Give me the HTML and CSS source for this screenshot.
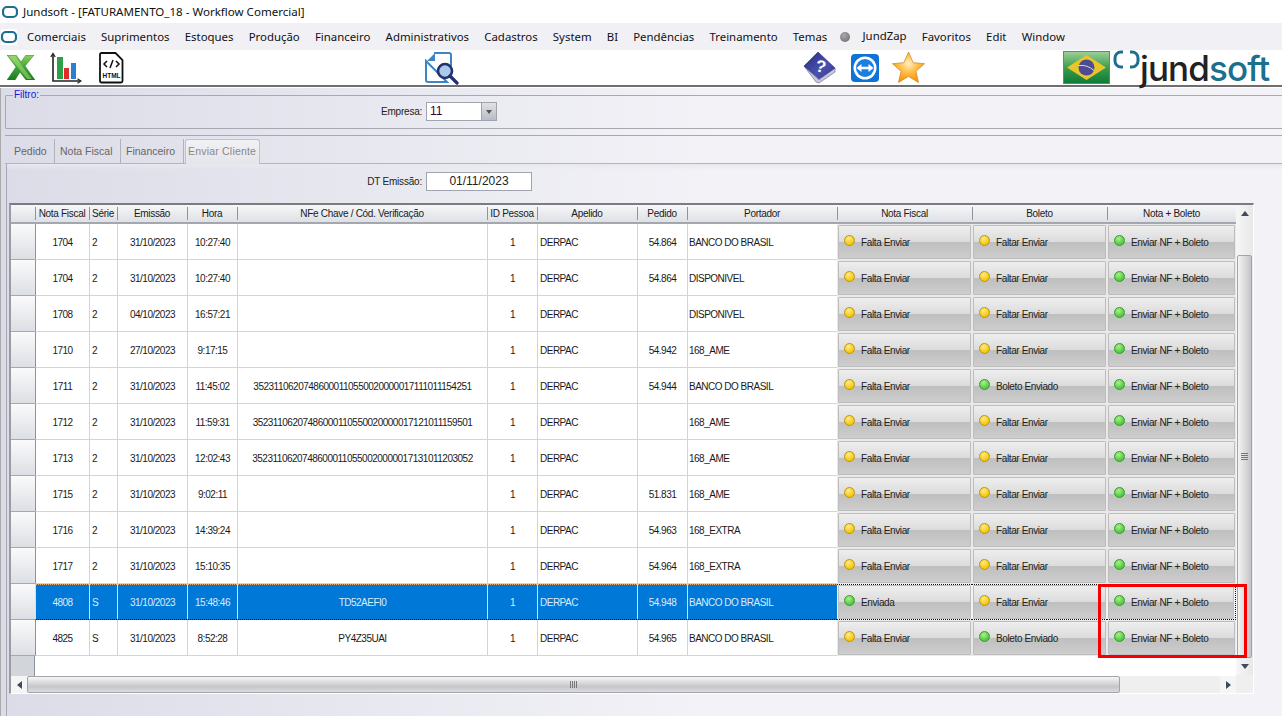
FILE: index.html
```html
<!DOCTYPE html>
<html lang="pt-BR">
<head>
<meta charset="utf-8">
<title>Jundsoft - [FATURAMENTO_18 - Workflow Comercial]</title>
<link rel="stylesheet" href="styles.css">
</head>
<body>
<svg class="defs" width="0" height="0" aria-hidden="true">
  <defs>
    <symbol id="app" viewBox="0 0 16 16">
      <path d="M5 3h6a4 4 0 0 1 4 4v2a4 4 0 0 1-4 4H5a4 4 0 0 1-4-4V7a4 4 0 0 1 4-4z" fill="none" stroke="#1c6f8f" stroke-width="2.2"/>
    </symbol>
    <radialGradient id="star" cx=".5" cy=".38" r=".62"><stop offset="0" stop-color="#fff0c8"/><stop offset=".45" stop-color="#ffc04a"/><stop offset="1" stop-color="#fb8f00"/></radialGradient>
    <linearGradient id="xl" x1="0" y1="0" x2="0" y2="1"><stop offset="0" stop-color="#8ed05c"/><stop offset=".5" stop-color="#3fa535"/><stop offset="1" stop-color="#1b7a20"/></linearGradient>
    <linearGradient id="book" x1="0" y1="0" x2="1" y2="1"><stop offset="0" stop-color="#2a2f80"/><stop offset=".6" stop-color="#4a50ae"/><stop offset="1" stop-color="#353a8e"/></linearGradient>
    <linearGradient id="flagbg" x1="0" y1="0" x2="0" y2="1"><stop offset="0" stop-color="#9fd09a"/><stop offset=".5" stop-color="#3c9d4c"/><stop offset="1" stop-color="#0c7a37"/></linearGradient>
  </defs>
</svg>

<div class="titlebar">
  <svg class="appicon" width="16" height="16"><use href="#app"/></svg>
  <span>Jundsoft - [FATURAMENTO_18 - Workflow Comercial]</span>
</div>

<nav class="menubar">
  <svg class="appicon menuicon" width="16" height="16"><use href="#app"/></svg>
  <span>Comerciais</span><span>Suprimentos</span><span>Estoques</span><span>Produção</span><span>Financeiro</span><span>Administrativos</span><span>Cadastros</span><span>System</span><span>BI</span><span>Pendências</span><span>Treinamento</span><span>Temas</span>
  <i class="zapdot"></i><span class="zap">JundZap</span><span>Favoritos</span><span>Edit</span><span>Window</span>
</nav>

<div class="toolbar">
  <div class="tools-left">
    <svg width="28" height="25" viewBox="0 0 28 25"><path d="M0 0h9l5 7 5-7h8l-9 11 10 14h-9l-6-8-5 8H0l9-13z" fill="url(#xl)" stroke="#1b7a20" stroke-width=".5"/><path d="M2 1h6l10 14 7 9h-5L9 10z" fill="#a6e07a" fill-opacity=".55"/></svg>
    <svg width="32" height="32" viewBox="0 0 32 32"><path d="M3 2v27h27" fill="none" stroke="#222" stroke-width="1.600"/><path d="M.8 5L3 1.500 5.200 5M27.500 26.800L31 29l-3.500 2.200" fill="none" stroke="#222" stroke-width="1.200"/><rect x="7" y="5" width="6" height="22" fill="#2ba24a"/><rect x="14" y="16" width="5" height="11" fill="#e32b2b"/><rect x="21" y="11" width="5" height="16" fill="#2b7fd0"/></svg>
    <svg class="htmlicon" width="25" height="32" viewBox="0 0 25 32"><path d="M2.500 1h14l7 7v21a1.500 1.500 0 0 1-1.500 1.500H2.500A1.500 1.500 0 0 1 1 29V2.500A1.500 1.500 0 0 1 2.500 1z" fill="#fff" stroke="#111" stroke-width="1.800"/><path d="M8 9l-3 3 3 3M17 9l3 3-3 3M14 8l-3 8" fill="none" stroke="#111" stroke-width="1.500"/><text x="12.500" y="26" text-anchor="middle" class="htmltext">HTML</text></svg>
  </div>
  <svg class="tool-search" width="34" height="34" viewBox="0 0 34 34"><path d="M9 2h15a2 2 0 0 1 2 2v11M22 31H3a2 2 0 0 1-2-2V10z" fill="none" stroke="#3d85c6" stroke-width="2"/><path d="M10 2L2 10h8z" fill="#3d85c6"/><circle cx="20" cy="20" r="7" fill="#a8cbe8" stroke="#27306f" stroke-width="2.600"/><path d="M25 25l7 7" stroke="#27306f" stroke-width="3.200" stroke-linecap="round"/></svg>
  <div class="tools-mid">
    <svg width="33" height="33" viewBox="0 0 33 33"><path d="M1 15l12 16 3 1 16-11v-4L16 29z" fill="#c9cbdc" stroke="#6a6fa8" stroke-width=".7"/><path d="M1 15L15 1l17 16-16 11z" fill="url(#book)" stroke="#2a2f78" stroke-width=".6"/><text x="0" y="0" text-anchor="middle" transform="translate(16.500 21) rotate(12)" class="booktext">?</text></svg>
    <svg width="28" height="28" viewBox="0 0 28 28"><rect width="28" height="28" rx="4" fill="#0e72d6"/><circle cx="14" cy="14" r="11.500" fill="#fff"/><circle cx="14" cy="14" r="9" fill="#1a7fe0"/><path d="M5.500 14l5-4v2.700h7V10l5 4-5 4v-2.700h-7V18z" fill="#fff"/></svg>
    <svg class="staricon" width="33" height="33" viewBox="0 0 33 33"><path d="M16.500 1l4.700 10.700 11.300 1-8.600 7.500 2.600 11.300-10-6.100-10 6.100 2.600-11.300L.5 12.700l11.300-1z" fill="url(#star)" stroke="#c98a3a" stroke-width=".8"/></svg>
  </div>
  <div class="brand">
    <svg class="flag" width="47" height="33" viewBox="0 0 47 33"><rect x=".5" y=".5" width="46" height="32" fill="url(#flagbg)" stroke="#4c9a60"/><path d="M4 16.500L23.500 4 43 16.500 23.500 29z" fill="#e8c52a"/><circle cx="23.500" cy="16.500" r="8" fill="#4d4a96"/><path d="M15.500 14.500q9-1 15.500 5" fill="none" stroke="#d8d8e8" stroke-width="1"/></svg>
    <svg class="brandmark" width="27" height="22" viewBox="0 0 27 22"><path d="M10 2H8a6 6 0 0 0-6 6v3a6 6 0 0 0 6 6h2M17 2h2a6 6 0 0 1 6 6v3a6 6 0 0 1-6 6h-2" fill="none" stroke="#1c6f8f" stroke-width="3"/></svg>
    <span class="brandname"><b>jund</b><em>soft</em></span>
  </div>
</div>
<div class="toolrule"></div>

<main class="workspace">
  <fieldset class="filter">
    <legend>Filtro:</legend>
    <div class="filter-row">
      <label class="fieldlabel">Empresa:</label>
      <div class="combo"><span>11</span><i class="combo-btn"></i></div>
    </div>
  </fieldset>

  <section class="tabpanel">
    <div class="tabs">
      <span class="tab">Pedido</span><span class="tab">Nota Fiscal</span><span class="tab">Financeiro</span><span class="tab active">Enviar Cliente</span>
    </div>
    <div class="tabbody">
      <div class="date-row">
        <label class="fieldlabel">DT Emissão:</label>
        <div class="dateinput">01/11/2023</div>
      </div>

      <div class="gridframe">
        <div class="gridmain">
          <table class="grid">
            <colgroup>
              <col class="c-ind"><col class="c-nf"><col class="c-ser"><col class="c-em"><col class="c-hr"><col class="c-key"><col class="c-id"><col class="c-ap"><col class="c-ped"><col class="c-port"><col class="c-btn"><col class="c-btn"><col class="c-last">
            </colgroup>
            <thead>
              <tr><th class="ind"></th><th>Nota Fiscal</th><th>Série</th><th>Emissão</th><th>Hora</th><th>NFe Chave / Cód. Verificação</th><th>ID Pessoa</th><th>Apelido</th><th>Pedido</th><th>Portador</th><th>Nota Fiscal</th><th>Boleto</th><th>Nota + Boleto</th></tr>
            </thead>
            <tbody>
              <tr><td class="ind"></td><td class="ct">1704</td><td>2</td><td class="ct">31/10/2023</td><td class="ct">10:27:40</td><td class="ct"></td><td class="ct">1</td><td>DERPAC</td><td class="ct">54.864</td><td class="port">BANCO DO BRASIL</td><td class="bc"><button><i class="led y"></i>Falta Enviar</button></td><td class="bc"><button><i class="led y"></i>Faltar Enviar</button></td><td class="bc"><button><i class="led g"></i>Enviar NF + Boleto</button></td></tr>
              <tr><td class="ind"></td><td class="ct">1704</td><td>2</td><td class="ct">31/10/2023</td><td class="ct">10:27:40</td><td class="ct"></td><td class="ct">1</td><td>DERPAC</td><td class="ct">54.864</td><td class="port">DISPONIVEL</td><td class="bc"><button><i class="led y"></i>Falta Enviar</button></td><td class="bc"><button><i class="led y"></i>Faltar Enviar</button></td><td class="bc"><button><i class="led g"></i>Enviar NF + Boleto</button></td></tr>
              <tr><td class="ind"></td><td class="ct">1708</td><td>2</td><td class="ct">04/10/2023</td><td class="ct">16:57:21</td><td class="ct"></td><td class="ct">1</td><td>DERPAC</td><td class="ct"></td><td class="port">DISPONIVEL</td><td class="bc"><button><i class="led y"></i>Falta Enviar</button></td><td class="bc"><button><i class="led y"></i>Faltar Enviar</button></td><td class="bc"><button><i class="led g"></i>Enviar NF + Boleto</button></td></tr>
              <tr><td class="ind"></td><td class="ct">1710</td><td>2</td><td class="ct">27/10/2023</td><td class="ct">9:17:15</td><td class="ct"></td><td class="ct">1</td><td>DERPAC</td><td class="ct">54.942</td><td class="port">168_AME</td><td class="bc"><button><i class="led y"></i>Falta Enviar</button></td><td class="bc"><button><i class="led y"></i>Faltar Enviar</button></td><td class="bc"><button><i class="led g"></i>Enviar NF + Boleto</button></td></tr>
              <tr><td class="ind"></td><td class="ct">1711</td><td>2</td><td class="ct">31/10/2023</td><td class="ct">11:45:02</td><td class="ct">35231106207486000110550020000017111011154251</td><td class="ct">1</td><td>DERPAC</td><td class="ct">54.944</td><td class="port">BANCO DO BRASIL</td><td class="bc"><button><i class="led y"></i>Falta Enviar</button></td><td class="bc"><button><i class="led g"></i>Boleto Enviado</button></td><td class="bc"><button><i class="led g"></i>Enviar NF + Boleto</button></td></tr>
              <tr><td class="ind"></td><td class="ct">1712</td><td>2</td><td class="ct">31/10/2023</td><td class="ct">11:59:31</td><td class="ct">35231106207486000110550020000017121011159501</td><td class="ct">1</td><td>DERPAC</td><td class="ct"></td><td class="port">168_AME</td><td class="bc"><button><i class="led y"></i>Falta Enviar</button></td><td class="bc"><button><i class="led y"></i>Faltar Enviar</button></td><td class="bc"><button><i class="led g"></i>Enviar NF + Boleto</button></td></tr>
              <tr><td class="ind"></td><td class="ct">1713</td><td>2</td><td class="ct">31/10/2023</td><td class="ct">12:02:43</td><td class="ct">35231106207486000110550020000017131011203052</td><td class="ct">1</td><td>DERPAC</td><td class="ct"></td><td class="port">168_AME</td><td class="bc"><button><i class="led y"></i>Falta Enviar</button></td><td class="bc"><button><i class="led y"></i>Faltar Enviar</button></td><td class="bc"><button><i class="led g"></i>Enviar NF + Boleto</button></td></tr>
              <tr><td class="ind"></td><td class="ct">1715</td><td>2</td><td class="ct">31/10/2023</td><td class="ct">9:02:11</td><td class="ct"></td><td class="ct">1</td><td>DERPAC</td><td class="ct">51.831</td><td class="port">168_AME</td><td class="bc"><button><i class="led y"></i>Falta Enviar</button></td><td class="bc"><button><i class="led y"></i>Faltar Enviar</button></td><td class="bc"><button><i class="led g"></i>Enviar NF + Boleto</button></td></tr>
              <tr><td class="ind"></td><td class="ct">1716</td><td>2</td><td class="ct">31/10/2023</td><td class="ct">14:39:24</td><td class="ct"></td><td class="ct">1</td><td>DERPAC</td><td class="ct">54.963</td><td class="port">168_EXTRA</td><td class="bc"><button><i class="led y"></i>Falta Enviar</button></td><td class="bc"><button><i class="led y"></i>Faltar Enviar</button></td><td class="bc"><button><i class="led g"></i>Enviar NF + Boleto</button></td></tr>
              <tr><td class="ind"></td><td class="ct">1717</td><td>2</td><td class="ct">31/10/2023</td><td class="ct">15:10:35</td><td class="ct"></td><td class="ct">1</td><td>DERPAC</td><td class="ct">54.964</td><td class="port">168_EXTRA</td><td class="bc"><button><i class="led y"></i>Falta Enviar</button></td><td class="bc"><button><i class="led y"></i>Faltar Enviar</button></td><td class="bc"><button><i class="led g"></i>Enviar NF + Boleto</button></td></tr>
              <tr class="selected"><td class="ind"></td><td class="ct">4808</td><td>S</td><td class="ct">31/10/2023</td><td class="ct">15:48:46</td><td class="ct">TD52AEFI0</td><td class="ct">1</td><td>DERPAC</td><td class="ct">54.948</td><td class="port">BANCO DO BRASIL</td><td class="bc"><button><i class="led g"></i>Enviada</button></td><td class="bc"><button><i class="led y"></i>Faltar Enviar</button></td><td class="bc"><button><i class="led g"></i>Enviar NF + Boleto</button></td></tr>
              <tr><td class="ind"></td><td class="ct">4825</td><td>S</td><td class="ct">31/10/2023</td><td class="ct">8:52:28</td><td class="ct">PY4Z35UAI</td><td class="ct">1</td><td>DERPAC</td><td class="ct">54.965</td><td class="port">BANCO DO BRASIL</td><td class="bc"><button><i class="led y"></i>Falta Enviar</button></td><td class="bc"><button><i class="led g"></i>Boleto Enviado</button></td><td class="bc"><button><i class="led g"></i>Enviar NF + Boleto</button></td></tr>
            </tbody>
          </table>
          <div class="grid-rest"><div class="ind-rest"></div></div>
          <div class="hscroll">
            <span class="sb-btn"><i class="arrow left"></i></span>
            <div class="hthumb"><i class="grip"></i></div>
            <span class="hspace"></span>
            <span class="sb-btn"><i class="arrow right"></i></span>
          </div>
        </div>
        <div class="vscroll">
          <span class="vbtn"><i class="arrow up"></i></span>
          <div class="vspace"></div>
          <div class="vthumb"><i class="vgrip"></i></div>
          <span class="vbtn"><i class="arrow down"></i></span>
          <span class="corner"></span>
        </div>
        <div class="callout"></div>
      </div>
    </div>
  </section>
</main>
</body>
</html>
```
FILE: styles.css
```css
* { box-sizing: border-box; }
html, body { margin: 0; height: 716px; overflow: hidden; }
body { font-family: "Liberation Sans", Arial, sans-serif; color: #1a1a1a; background: #fff; display: flex; flex-direction: column; }
.defs { position: absolute; }

.titlebar { height: 23px; display: flex; align-items: center; padding-left: 2px; gap: 5px; font: 11.550px "Noto Sans", sans-serif; background: #fff; color: #111; flex: none; }
.appicon { flex: none; }
.menubar { height: 27px; flex: none; display: flex; align-items: center; background: #f0f0f5; font: 11.400px "Noto Sans", sans-serif; color: #111; padding-left: 1px; }
.menubar span { margin-right: 15.200px; white-space: nowrap; }
.menuicon { background: #fff; margin-right: 10px; }
.zapdot { width: 10px; height: 10px; border-radius: 50%; background: radial-gradient(circle at 40% 35%, #aaa, #666); margin-right: 12px; margin-left: -2px; flex: none; }
.menubar .zap { position: relative; top: -1px; }

.toolbar { height: 35px; flex: none; display: flex; background: #fff; padding-left: 7px; position: relative; }
.tools-left { display: flex; align-items: center; gap: 15px; width: 418px; }
.htmlicon { margin-left: 2px; }
.htmltext { font: bold 6.500px "Liberation Sans", sans-serif; fill: #111; }
.booktext { font: bold 17px "Liberation Sans", sans-serif; fill: #fff; }
.tool-search { margin-top: 1px; flex: none; }
.tools-mid { margin-left: 344px; display: flex; align-items: center; gap: 15px; width: 260px; }
.staricon { margin-left: -2px; }
.brand { display: flex; align-items: flex-start; position: relative; }
.flag { margin-top: 1px; flex: none; }
.brandmark { margin: 0 0 0 3px; flex: none; }
.brandname { font: 500 35px/32px Inter, sans-serif; letter-spacing: -.9px; margin: 2px 0 0 0; white-space: nowrap; }
.brandname b { font-weight: 500; color: #222; }
.brandname em { font-style: normal; color: #1c6f8f; }
.toolrule { height: 3px; flex: none; border-top: 2px solid #6e6e6e; border-bottom: 1px solid #fff; background: #777; }

.workspace { flex: 1; min-height: 0; background: linear-gradient(90deg, #dcdce8, #f2f2f7 55%); padding: 2px 0 0 4px; border-left: 1px solid #aaa; display: flex; flex-direction: column; }
.filter { margin: 0; padding: 0; height: 39px; border: 0; border-top: 1px solid #a6a9b2; border-bottom: 1px solid #a6a9b2; border-left: 1px solid #a6a9b2; border-radius: 2px 0 0 2px; min-width: 0; flex: none; }
.filter legend { padding: 0 1px; margin-left: 7px; font-size: 10px; line-height: 10px; color: #1414e0; }
.filter-row { display: flex; align-items: center; padding-left: 375px; margin-top: 2px; gap: 4px; }
.fieldlabel { font-size: 10px; letter-spacing: -.2px; width: 41px; text-align: right; color: #222; white-space: nowrap; }
.combo { width: 71px; height: 19px; background: #fff; border: 1px solid #a0a4ae; display: flex; justify-content: space-between; font-size: 12px; line-height: 17px; padding-left: 3px; color: #300040; }
.combo-btn { width: 15px; background: linear-gradient(#dfe1e6, #b9bcc4); border-left: 1px solid #a0a4ae; position: relative; }
.combo-btn::after { content: ""; position: absolute; left: 4px; top: 7px; border: 3px solid transparent; border-top: 4px solid #555; }

.tabpanel { flex: 1; min-height: 0; margin-top: 6px; border-top: 1px solid #a6a9b2; display: flex; flex-direction: column; }
.tabs { height: 28px; flex: none; display: flex; align-items: flex-end; padding: 3px 0 0 0; border-bottom: 1px solid #b4b6bc; }
.tab { height: 24px; padding: 0 5px; font-size: 10.500px; line-height: 24px; color: #666; border-right: 1px solid #b0b2ba; white-space: nowrap; }
.tab:nth-child(1) { width: 50px; padding-left: 9px; }
.tab:nth-child(2) { width: 66px; }
.tab:nth-child(3) { width: 63px; margin-right: 1px; }
.tab.active { width: 75px; height: 25px; margin-bottom: -1px; padding: 0 2px; letter-spacing: .2px; line-height: 22px; color: #888; background: linear-gradient(#f2f2f5, #e4e4ea); border: 1px solid #c0c2c8; border-bottom: 0; border-radius: 3px 3px 0 0; }
.tabbody { flex: 1; min-height: 0; padding: 7px 0 0 2px; background: linear-gradient(#e8e8ee, transparent 6px); margin-left: 1px; border-left: 1px solid #a6a9b2; }
.date-row { display: flex; align-items: center; gap: 4px; padding-left: 357px; height: 20px; }
.date-row .fieldlabel { width: 56px; }
.dateinput { width: 106px; height: 19px; background: #fff; border: 1px solid #a0a4ae; text-align: center; font-size: 12px; line-height: 17px; color: #222; }

.gridframe { width: 1245px; height: 491px; margin-top: 12px; display: flex; position: relative; border-top: 2px solid #7a7c80; border-left: 2px solid #9a9ca0; border-right: 1px solid #fff; border-bottom: 1px solid #fff; background: #fff; }
.gridmain { width: 1225px; flex: none; display: flex; flex-direction: column; }
.grid { table-layout: fixed; width: 1225px; border-collapse: separate; border-spacing: 0; font-size: 10px; letter-spacing: -.5px; color: #1a1a1a; flex: none; }
.c-ind { width: 24px; } .c-nf { width: 54px; } .c-ser { width: 28px; } .c-em { width: 70px; } .c-hr { width: 50px; } .c-key { width: 250px; } .c-id { width: 50px; } .c-ap { width: 100px; } .c-ped { width: 50px; } .c-port { width: 150px; } .c-btn { width: 135px; } .c-last { width: 129px; }
.grid th { height: 19px; padding: 0; font-weight: 400; font-size: 10px; letter-spacing: -.3px; background: linear-gradient(#f6f7f9, #dde0e5); border-bottom: 2px solid #a4a7ae; position: relative; white-space: nowrap; overflow: hidden; }
.grid th + th::before { content: ""; position: absolute; left: 0; top: 2px; bottom: 2px; width: 1px; background: #8f939c; }
.grid td { height: 36px; padding: 1px 0 0 2px; border-left: 1px solid #d4d4d4; border-bottom: 1px solid #d4d4d4; white-space: nowrap; overflow: hidden; }
.grid td.ct { text-align: center; padding: 1px 0 0; }
.grid td.port { padding-left: 1px; }
.grid td.ind { padding: 0; border-left: 0; background: linear-gradient(#fafafb, #dcdfe4); border-bottom: 1px solid #a4a7ae; }
.grid td.ind + td { border-left-color: #8f939c; }
.grid td.bc { padding: 1px; border-left: 0; border-bottom: 0; background: #e9e9e9; }
.grid tr.selected td { background: #0078d7; color: #dcebf8; border-left-color: #cfe2f3; border-top: 1px dotted #e8b070; border-bottom: 1px dotted #111; }
.grid tr.selected td.ind { background: linear-gradient(#fafafb, #dcdfe4); border-top: 0; border-bottom: 1px solid #a4a7ae; }
.grid tr.selected td.bc { background: #f4f4f4; padding: 0 1px; border-top: 1px dotted #111; }
.grid tr.selected td.bc:last-child { border-right: 1px dotted #111; }
.grid button { width: 100%; height: 34px; padding: 0 0 0 5px; display: flex; align-items: center; font: 10px "Liberation Sans", sans-serif; letter-spacing: -.38px; color: #222; border: 1px solid #bdbdbd; border-radius: 1px; background: linear-gradient(#eeeeee, #dcdcdc 49%, #bfbfbf 50%, #cdcdcd 100%); }
.led { width: 11px; height: 11px; border-radius: 50%; margin: -3px 6px 0 0; flex: none; }
.led.y { border: 1px solid #b8951e; background: radial-gradient(circle at 40% 30%, #ffeb8c, #f7c600 70%); }
.led.g { border: 1px solid #3a9a2e; background: radial-gradient(circle at 40% 30%, #aaf08e, #4fc93c 70%); }

.grid-rest { flex: 1; min-height: 0; background: #fff; }
.ind-rest { width: 24px; height: 100%; background: #d2d5da; border-right: 1px solid #8f939c; }
.hscroll { height: 17px; flex: none; display: flex; background: #efefef; align-items: stretch; }
.sb-btn { width: 16px; flex: none; display: flex; align-items: center; justify-content: center; background: #f5f5f5; }
.hthumb { width: 1093px; flex: none; border: 1px solid #a2a4a8; border-radius: 2px; background: linear-gradient(#f6f6f6, #c6c6ca 65%, #dcdcdf); display: flex; align-items: center; justify-content: center; }
.grip { width: 7px; height: 7px; background: repeating-linear-gradient(90deg, #777 0 1px, transparent 1px 2px); }
.hspace { flex: 1; }
.arrow { width: 0; height: 0; border: 4px solid transparent; display: block; }
.arrow.left { border-right: 5px solid #3f4a5c; border-left: 0; }
.arrow.right { border-left: 5px solid #3f4a5c; border-right: 0; }
.arrow.up { border-bottom: 5px solid #3f4a5c; border-top: 0; }
.arrow.down { border-top: 5px solid #3f4a5c; border-bottom: 0; }

.vscroll { width: 17px; flex: none; display: flex; flex-direction: column; background: linear-gradient(90deg, #f6f6f6, #e8e8e8); }
.vbtn { height: 17px; flex: none; display: flex; align-items: center; justify-content: center; }
.vspace { height: 33px; flex: none; }
.vthumb { height: 403px; flex: none; margin: 0 1px; border: 1px solid #a2a4a8; border-radius: 2px; background: linear-gradient(90deg, #f4f4f4, #c4c4c8); display: flex; align-items: center; justify-content: center; }
.vgrip { width: 7px; height: 7px; background: repeating-linear-gradient(#777 0 1px, transparent 1px 2px); }
.corner { flex: 1; background: #efefef; }

.callout { position: absolute; left: 1087px; top: 379px; width: 149px; height: 74px; border: 3px solid #f40000; pointer-events: none; }
```
